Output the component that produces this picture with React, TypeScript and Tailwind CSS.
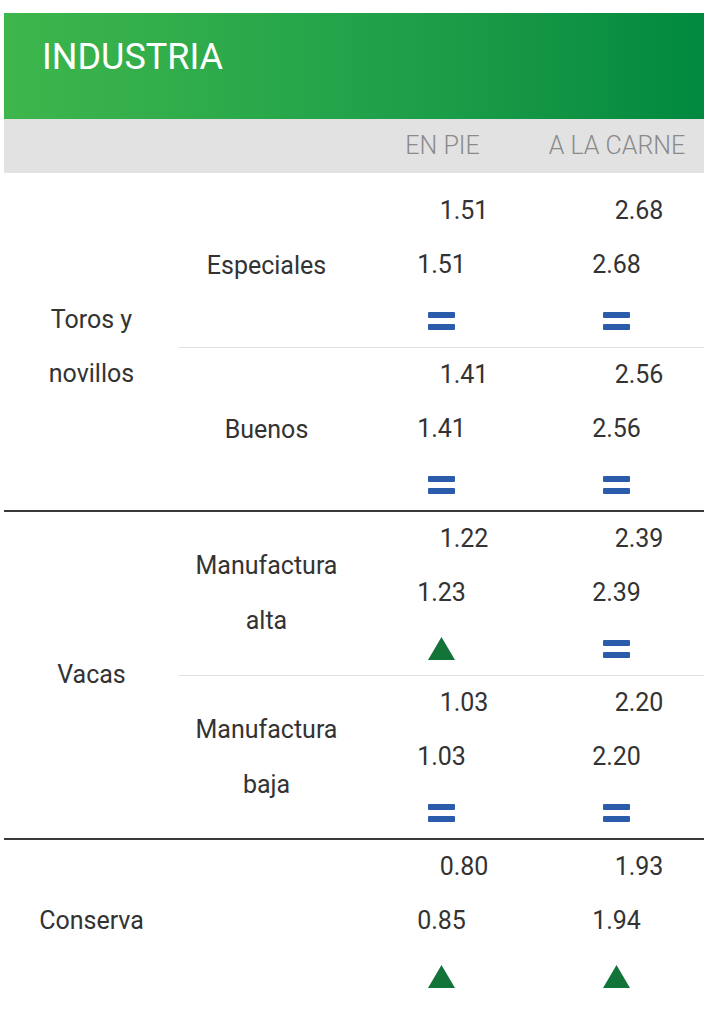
import React from "react";

type Trend = "eq" | "up";

const EqualIcon = () => (
  <div className="flex flex-col gap-[6px] mt-[3px]">
    <div className="w-[27px] h-[6px] rounded-[1px] bg-[#2a5cab]" />
    <div className="w-[27px] h-[6px] rounded-[1px] bg-[#2a5cab]" />
  </div>
);

const UpIcon = () => (
  <svg width="27" height="23" viewBox="0 0 27 23" className="mt-[3px]">
    <polygon points="13.5,0 27,23 0,23" fill="#13743a" />
  </svg>
);

const ValueCell = ({ prev, cur, trend }: { prev: string; cur: string; trend: Trend }) => (
  <div className="w-[175px] flex flex-col">
    <div className="h-[54px] flex items-center justify-center pl-[45px]">{prev}</div>
    <div className="h-[54px] flex items-center justify-center">{cur}</div>
    <div className="h-[54px] flex items-center justify-center">
      {trend === "eq" ? <EqualIcon /> : <UpIcon />}
    </div>
  </div>
);

type Sub = { label: string[]; pie: [string, string, Trend]; carne: [string, string, Trend] };

const SubRow = ({ sub, border, first }: { sub: Sub; border: boolean; first: boolean }) => (
  <div
    className={
      "flex " +
      (border ? "border-t border-[#e3e3e3] " : "") +
      (first ? "pb-[1px]" : "")
    }
  >
    <div className="w-[175px] flex flex-col items-center justify-center text-center leading-[55px]">
      {sub.label.map((l) => (
        <div key={l}>{l}</div>
      ))}
    </div>
    <ValueCell prev={sub.pie[0]} cur={sub.pie[1]} trend={sub.pie[2]} />
    <ValueCell prev={sub.carne[0]} cur={sub.carne[1]} trend={sub.carne[2]} />
  </div>
);

const Group = ({ label, subs, top }: { label: string[]; subs: Sub[]; top: boolean }) => (
  <div className={"flex " + (top ? "border-t-2 border-[#3a3a3a]" : "")}>
    <div className="w-[176px] flex flex-col items-center justify-center text-center leading-[54px]">
      {label.map((l) => (
        <div key={l}>{l}</div>
      ))}
    </div>
    <div className="flex flex-col">
      {subs.map((s, i) => (
        <SubRow key={i} sub={s} border={i > 0} first={i === 0 && subs.length > 1} />
      ))}
    </div>
  </div>
);

export default function App() {
  return (
    <div
      className="w-[711px] min-h-[1024px] bg-white pt-[13px] pl-[4px] pr-[7px] text-[#333333] text-[25px]"
      style={{ fontFamily: "Roboto, 'Noto Sans', sans-serif" }}
    >
      <div className="h-[106px] bg-linear-to-r from-[#3db64b] via-[#22a34a] to-[#00893f] pl-[38px] pt-[22px]">
        <div className="text-white text-[36px] leading-[44px]">INDUSTRIA</div>
      </div>
      <div className="h-[54px] bg-[#e2e2e2] flex items-center text-[#8a8a8a] text-[25px] font-light">
        <div className="w-[176px]" />
        <div className="w-[175px]" />
        <div className="w-[175px] text-center">EN PIE</div>
        <div className="w-[174px] text-center">A LA CARNE</div>
      </div>
      <div className="pt-[11px]">
        <Group
          top={false}
          label={["Toros y", "novillos"]}
          subs={[
            { label: ["Especiales"], pie: ["1.51", "1.51", "eq"], carne: ["2.68", "2.68", "eq"] },
            { label: ["Buenos"], pie: ["1.41", "1.41", "eq"], carne: ["2.56", "2.56", "eq"] },
          ]}
        />
        <Group
          top={true}
          label={["Vacas"]}
          subs={[
            { label: ["Manufactura", "alta"], pie: ["1.22", "1.23", "up"], carne: ["2.39", "2.39", "eq"] },
            { label: ["Manufactura", "baja"], pie: ["1.03", "1.03", "eq"], carne: ["2.20", "2.20", "eq"] },
          ]}
        />
        <Group
          top={true}
          label={["Conserva"]}
          subs={[{ label: [""], pie: ["0.80", "0.85", "up"], carne: ["1.93", "1.94", "up"] }]}
        />
      </div>
    </div>
  );
}
